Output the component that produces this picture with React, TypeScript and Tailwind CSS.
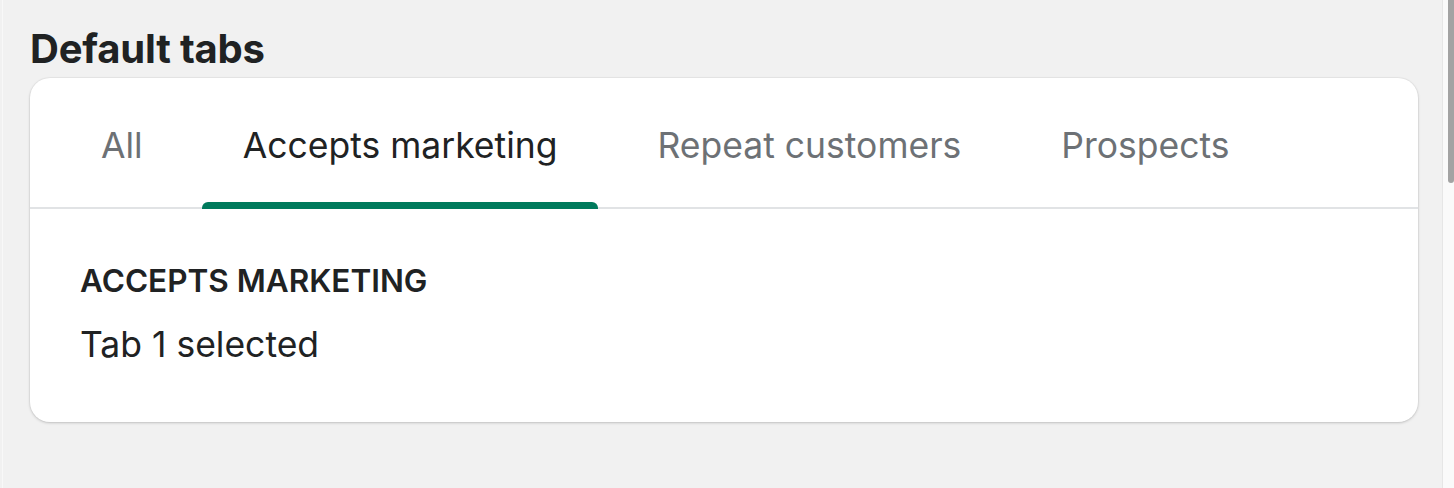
import React from "react";

const tabs = ["All", "Accepts marketing", "Repeat customers", "Prospects"];

export default function App() {
  const selected = 1;

  return (
    <div className="flex h-[488px] w-[1454px] overflow-hidden bg-[#f1f1f1] font-['Inter',sans-serif] text-[#202223]">
      <div className="w-[3px] border-r border-[#f8f8f8]" />
      <main className="flex-1 pl-[27px] pr-[24px] pt-[23px]">
        <h1 className="text-[40px] leading-[51px] font-bold tracking-[-0.2px]">Default tabs</h1>

        <section className="mt-[4px] w-[1388px] rounded-[20px] bg-white shadow-[0_1px_3px_rgba(0,0,0,0.18),0_0_0_1px_rgba(0,0,0,0.03)]">
          <div className="flex h-[131px] gap-[18px] border-b-[2px] border-[#e1e3e5] pl-[30px]">
            {tabs.map((tab, i) => (
              <button
                key={tab}
                className={`relative flex items-center px-[41px] pt-[6px] text-[35.5px] ${
                  i === selected ? "text-[#202223]" : "text-[#6d7175]"
                }`}
              >
                {tab}
                {i === selected && (
                  <span className="absolute -bottom-[2px] left-0 right-0 h-[7px] rounded-t-[6px] bg-[#007a5c]" />
                )}
              </button>
            ))}
          </div>

          <div className="px-[50px] pb-[56px] pt-[50px]">
            <h2 className="text-[31.5px] leading-[44px] font-semibold uppercase">Accepts marketing</h2>
            <p className="mt-[21px] text-[35.5px] leading-[42px]">Tab 1 selected</p>
          </div>
        </section>
      </main>

      <div className="flex w-[12px] justify-end border-l border-[#e6e6e6] bg-[#fafafa]">
        <div className="h-[183px] w-[6px] rounded-b-[4px] bg-[#a3a3a3]" />
      </div>
    </div>
  );
}
